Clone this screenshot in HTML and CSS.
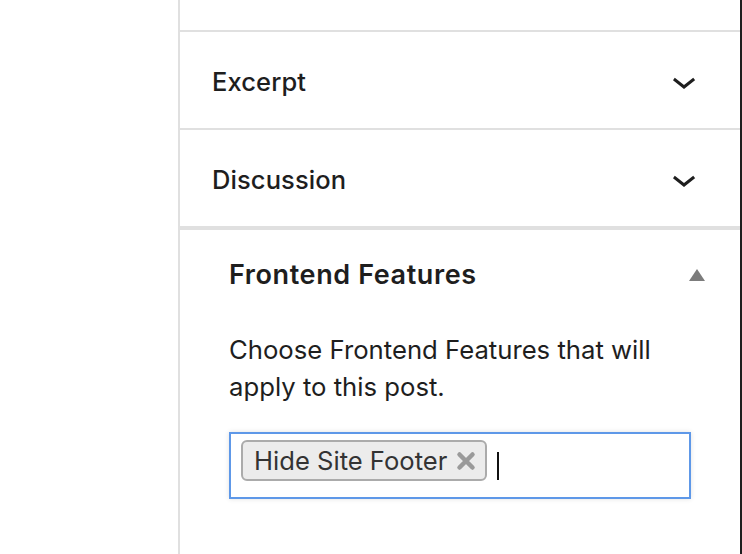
FILE: index.html
```html
<!DOCTYPE html>
<html lang="en">
<head>
<meta charset="utf-8">
<title>Sidebar panels</title>
<link rel="stylesheet" href="styles.css">
</head>
<body>
<div class="layout">
  <div class="gutter"></div>
  <aside class="sidebar">
    <div class="panel-top"></div>
    <div class="panel-row">
      <span class="panel-title">Excerpt</span>
      <svg class="chevron" viewBox="0 0 24 24" width="48" height="48"><path d="M17.5 11.6L12 16l-5.5-4.4.9-1.2L12 14l4.6-3.6 1 1.2z"/></svg>
    </div>
    <div class="panel-row panel-row-last">
      <span class="panel-title">Discussion</span>
      <svg class="chevron" viewBox="0 0 24 24" width="48" height="48"><path d="M17.5 11.6L12 16l-5.5-4.4.9-1.2L12 14l4.6-3.6 1 1.2z"/></svg>
    </div>
    <section class="metabox">
      <div class="metabox-head">
        <h2 class="metabox-title">Frontend Features</h2>
        <svg class="toggle" viewBox="0 0 16 12" width="16" height="12"><polygon points="8,0 16,12 0,12"/></svg>
      </div>
      <p class="metabox-desc">Choose Frontend Features that will apply to this post.</p>
      <div class="select">
        <span class="token">Hide Site Footer<svg class="token-x" viewBox="0 0 20 20" width="20" height="20"><path d="M3.5 3.5L16.5 16.5M16.5 3.5L3.5 16.5"/></svg></span>
        <span class="caret"></span>
      </div>
    </section>
  </aside>
</div>
</body>
</html>
```
FILE: styles.css
```css
html, body {
  margin: 0;
  padding: 0;
  background: #fff;
}
body {
  font-family: Inter, "Noto Sans", "Liberation Sans", sans-serif;
  color: #1e1e1e;
}
.layout {
  display: flex;
  height: 554px;
  overflow: hidden;
}
.gutter {
  width: 178px;
  flex: none;
}
.sidebar {
  flex: 1;
  border-left: 2px solid #e0e0e0;
  border-right: 2px solid #1e1e1e;
  display: flex;
  flex-direction: column;
}
.panel-top {
  height: 30px;
  border-bottom: 2px solid #e0e0e0;
}
.panel-row {
  height: 96px;
  padding: 0 32px;
  display: flex;
  align-items: center;
  justify-content: space-between;
  border-bottom: 2px solid #e0e0e0;
}
.panel-row-last {
  border-bottom-width: 4px;
}
.panel-title {
  font-size: 25.5px;
  font-weight: 500;
  letter-spacing: 0.1px;
  margin-top: 2px;
}
.chevron {
  fill: #1e1e1e;
  margin-top: 2px;
}
.metabox {
  padding: 28px 49px 0 49px;
}
.metabox-head {
  display: flex;
  align-items: center;
  justify-content: space-between;
  margin-right: -14px;
  height: 34px;
}
.metabox-title {
  margin: 0;
  font-size: 27px;
  font-weight: 600;
  line-height: 34px;
  letter-spacing: 0.6px;
}
.toggle {
  fill: #7c7c7c;
}
.metabox-desc {
  margin: 39px 0 0 0;
  font-size: 25.7px;
  line-height: 37px;
  color: #1e1e1e;
}
.select {
  margin-top: 27px;
  height: 67px;
  box-sizing: border-box;
  border: 2px solid #5e98e8;
  box-shadow: 0 0 5px rgba(0, 0, 0, 0.12);
  padding: 6px 10px;
  display: flex;
  align-items: flex-start;
}
.token {
  display: inline-flex;
  align-items: center;
  height: 41px;
  box-sizing: border-box;
  padding: 0 9px 0 11px;
  border: 2px solid #ababab;
  border-radius: 6px;
  background: #ececec;
  font-size: 25.6px;
  color: #333;
  gap: 9px;
}
.token-x {
  stroke: #9a9a9a;
  stroke-width: 4.5;
  stroke-linecap: round;
}
.caret {
  width: 2px;
  height: 28px;
  background: #111;
  margin: 12px 0 0 10px;
}
```
